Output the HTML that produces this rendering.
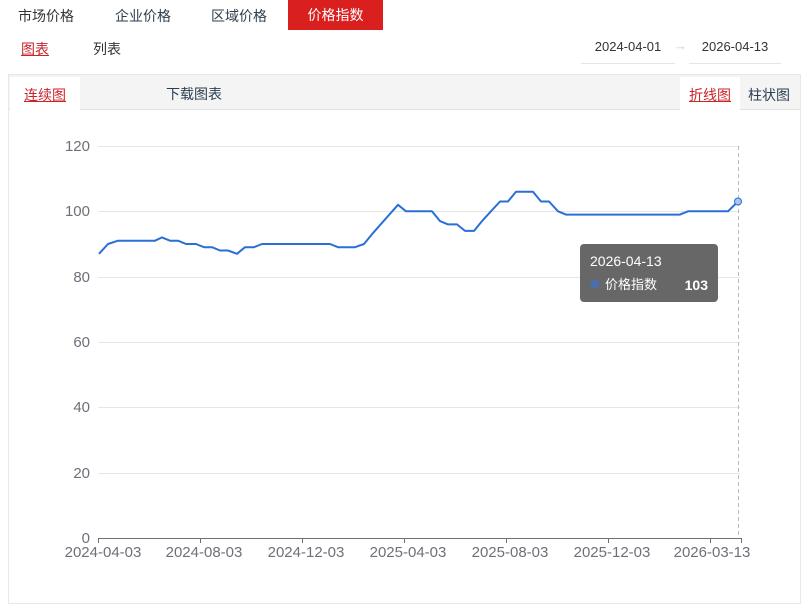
<!DOCTYPE html>
<html><head><meta charset="utf-8"><style>
*{margin:0;padding:0;box-sizing:border-box}
body{width:805px;height:591px;background:#fff;font-family:"Liberation Sans","Noto Sans CJK SC",sans-serif;position:relative;overflow:hidden;color:#333}
.a{position:absolute;font-size:14px;white-space:nowrap}
</style></head><body>
<div class="a" style="left:18px;top:6px;color:#333">市场价格</div>
<div class="a" style="left:115px;top:6px;color:#2c3e50">企业价格</div>
<div class="a" style="left:211px;top:6px;color:#2c3e50">区域价格</div>
<div class="a" style="left:288px;top:0;width:95px;height:30px;background:#d9201f;color:#fff;text-align:center;line-height:30px">价格指数</div>
<div class="a" style="left:21px;top:39px;color:#c9232b;text-decoration:underline">图表</div>
<div class="a" style="left:93px;top:39px;color:#333">列表</div>
<div class="a" style="left:581px;top:37px;width:94px;height:27px;border-bottom:1px solid #e5e5e5;font-size:13px;text-align:center;line-height:20px">2024-04-01</div>
<div class="a" style="left:674px;top:38px;color:#ccc;font-size:13px">→</div>
<div class="a" style="left:689px;top:37px;width:92px;height:27px;border-bottom:1px solid #e5e5e5;font-size:13px;text-align:center;line-height:20px">2026-04-13</div>
<div class="a" style="left:8px;top:74px;width:793px;height:530px;border:1px solid #e8e8e8"></div>
<div class="a" style="left:9px;top:75px;width:791px;height:35px;background:#f4f4f4;border-bottom:1px solid #e0e0e0"></div>
<div class="a" style="left:10px;top:77px;width:70px;height:33px;background:#fff"></div>
<div class="a" style="left:24px;top:85px;color:#c9232b;text-decoration:underline">连续图</div>
<div class="a" style="left:166px;top:84px;color:#2c3e50">下载图表</div>
<div class="a" style="left:680px;top:77px;width:60px;height:33px;background:#fff"></div>
<div class="a" style="left:689px;top:85px;color:#c9232b;text-decoration:underline">折线图</div>
<div class="a" style="left:748px;top:85px;color:#2c3e50">柱状图</div>
<svg class="a" style="left:0;top:0" width="805" height="591">
<g stroke="#e6e6e6" stroke-width="1">
<line x1="98" y1="146.5" x2="740" y2="146.5"/><line x1="98" y1="211.5" x2="740" y2="211.5"/><line x1="98" y1="277.5" x2="740" y2="277.5"/><line x1="98" y1="342.5" x2="740" y2="342.5"/><line x1="98" y1="407.5" x2="740" y2="407.5"/><line x1="98" y1="473.5" x2="740" y2="473.5"/>
</g>
<line x1="738.5" y1="146" x2="738.5" y2="538" stroke="#bbb" stroke-dasharray="4,3"/>
<line x1="98" y1="538.5" x2="742" y2="538.5" stroke="#6e7079"/>
<g stroke="#6e7079"><line x1="98.5" y1="538" x2="98.5" y2="543"/><line x1="200.5" y1="538" x2="200.5" y2="543"/><line x1="302.5" y1="538" x2="302.5" y2="543"/><line x1="404.5" y1="538" x2="404.5" y2="543"/><line x1="506.5" y1="538" x2="506.5" y2="543"/><line x1="608.5" y1="538" x2="608.5" y2="543"/><line x1="710.5" y1="538" x2="710.5" y2="543"/><line x1="741.5" y1="538" x2="741.5" y2="543"/></g>
<g fill="#6e7079" font-size="15" text-anchor="end" font-family="Liberation Sans,sans-serif">
<text x="90" y="151">120</text><text x="90" y="216">100</text><text x="90" y="282">80</text><text x="90" y="347">60</text><text x="90" y="412">40</text><text x="90" y="478">20</text><text x="90" y="543">0</text></g>
<g fill="#6e7079" font-size="15" text-anchor="middle" font-family="Liberation Sans,sans-serif">
<text x="103" y="557">2024-04-03</text><text x="204" y="557">2024-08-03</text><text x="306" y="557">2024-12-03</text><text x="408" y="557">2025-04-03</text><text x="510" y="557">2025-08-03</text><text x="612" y="557">2025-12-03</text><text x="712" y="557">2026-03-13</text></g>
<polyline fill="none" stroke="#2a6fd6" stroke-width="2" stroke-linejoin="round" points="99,253.8 108,244 118,240.7 155,240.7 162,237.4 170,240.7 178,240.7 186,244 196,244 204,247.2 212,247.2 220,250.5 228,250.5 237,253.8 245,247.2 254,247.2 262,244 330,244 338,247.2 355,247.2 364,244 372,234.2 398,204.8 406,211.3 432,211.3 440,221.1 448,224.4 457,224.4 465,230.9 474,230.9 482,221.1 500,201.5 508,201.5 516,191.7 533,191.7 541,201.5 549,201.5 558,211.3 566,214.6 680,214.6 688,211.3 728,211.3 738,201.5"/>
<circle cx="738" cy="201.5" r="3.5" fill="#a9c6ef" stroke="#2a6fd6"/>
<rect x="580" y="244" width="138" height="58" rx="4" fill="#5f5f5f" fill-opacity="0.95"/>
<text x="590" y="266" fill="#fff" font-size="14" font-family="Liberation Sans,sans-serif">2026-04-13</text>
<rect x="591" y="280" width="8" height="8" fill="#4a6ea8"/>
<text x="605" y="289" fill="#fff" font-size="13" font-family="Liberation Sans,Noto Sans CJK SC,sans-serif">价格指数</text>
<text x="708" y="290" fill="#fff" font-size="14" font-weight="bold" text-anchor="end" font-family="Liberation Sans,sans-serif">103</text>
</svg>
</body></html>
